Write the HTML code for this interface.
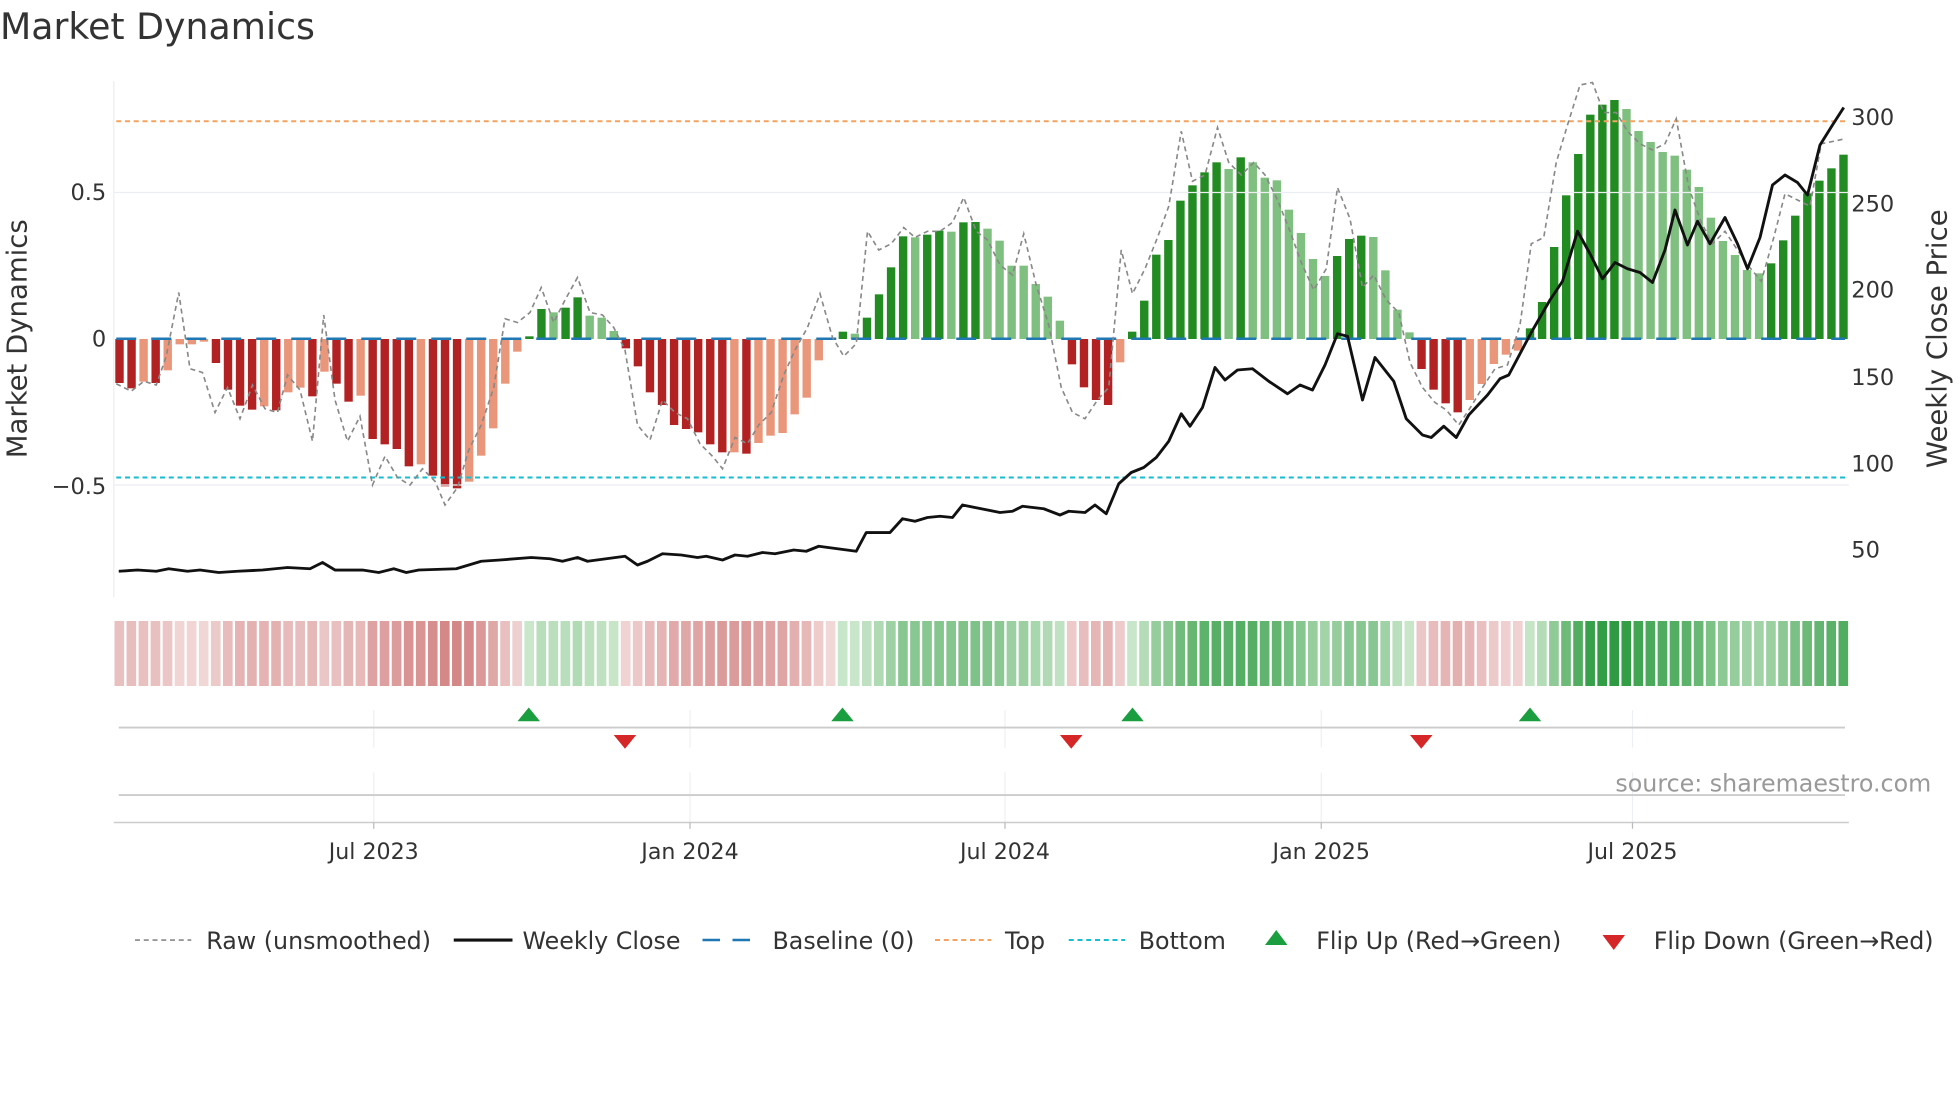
<!DOCTYPE html>
<html><head><meta charset="utf-8"><style>
html,body{margin:0;padding:0;background:#fff;width:1960px;height:1102px;overflow:hidden}
svg text{font-family:"DejaVu Sans","Liberation Sans",sans-serif;fill:#333}
</style></head><body>
<svg id="s" width="1960" height="1102" viewBox="0 0 1960 1102" xmlns="http://www.w3.org/2000/svg">
<g id="bars"></g>
<g id="strip"></g>
<g transform="scale(1.25)">
  <text x="0" y="31" font-size="29">Market Dynamics</text>
  <line x1="91" y1="65" x2="91" y2="478" stroke="#eee" stroke-width="1"/>
  <line x1="91" y1="154" x2="1479" y2="154" stroke="#eceef2" stroke-width="1"/>
  <line x1="91" y1="388" x2="1479" y2="388" stroke="#eceef2" stroke-width="1"/>
  <text x="85" y="160" font-size="18" text-anchor="end">0.5</text>
  <text x="85" y="277" font-size="18" text-anchor="end">0</text>
  <text x="85" y="395" font-size="18" text-anchor="end">−0.5</text>
  <text x="1481" y="100" font-size="18">300</text>
  <text x="1481" y="169" font-size="18">250</text>
  <text x="1481" y="238" font-size="18">200</text>
  <text x="1481" y="308" font-size="18">150</text>
  <text x="1481" y="377" font-size="18">100</text>
  <text x="1481" y="446" font-size="18">50</text>
  <text transform="translate(21,271) rotate(-90)" font-size="22" text-anchor="middle">Market Dynamics</text>
  <text transform="translate(1557,271) rotate(-90)" font-size="22" text-anchor="middle">Weekly Close Price</text>
  <line x1="93" y1="271" x2="1476" y2="271" stroke="#1f77b4" stroke-width="2" stroke-dasharray="16,12"/>
  <line x1="93" y1="97" x2="1476" y2="97" stroke="#f4a460" stroke-width="1.6" stroke-dasharray="4,3"/>
  <line x1="93" y1="382" x2="1476" y2="382" stroke="#17becf" stroke-width="1.6" stroke-dasharray="4,3"/>
  <polyline id="raw" fill="none" stroke="#888" stroke-width="1.3" stroke-dasharray="4,3"/>
  <polyline id="close" fill="none" stroke="#111" stroke-width="2.3" stroke-linejoin="round"/>
  <g stroke="#eef0f3" stroke-width="1">
    <line x1="299" y1="568" x2="299" y2="598"/><line x1="552" y1="568" x2="552" y2="598"/><line x1="804" y1="568" x2="804" y2="598"/><line x1="1057" y1="568" x2="1057" y2="598"/><line x1="1306" y1="568" x2="1306" y2="598"/>
    <line x1="299" y1="618" x2="299" y2="658"/><line x1="552" y1="618" x2="552" y2="658"/><line x1="804" y1="618" x2="804" y2="658"/><line x1="1057" y1="618" x2="1057" y2="658"/><line x1="1306" y1="618" x2="1306" y2="658"/>
  </g>
  <line x1="95" y1="582" x2="1476" y2="582" stroke="#ccc" stroke-width="1.5"/>
  <line x1="95" y1="636" x2="1476" y2="636" stroke="#ccc" stroke-width="1.5"/>
  <line x1="91" y1="658" x2="1479" y2="658" stroke="#ccc" stroke-width="1.2"/>
  <g stroke="#bbb"><line x1="299" y1="658" x2="299" y2="663"/><line x1="552" y1="658" x2="552" y2="663"/><line x1="804" y1="658" x2="804" y2="663"/><line x1="1057" y1="658" x2="1057" y2="663"/><line x1="1306" y1="658" x2="1306" y2="663"/></g>
  <g font-size="17.7" text-anchor="middle">
    <text x="299" y="687">Jul 2023</text><text x="552" y="687">Jan 2024</text><text x="804" y="687">Jul 2024</text><text x="1057" y="687">Jan 2025</text><text x="1306" y="687">Jul 2025</text>
  </g>
  <text x="1545" y="633" font-size="19" text-anchor="end" style="fill:#999">source: sharemaestro.com</text>
  <g fill="#1a9e3f">
    <polygon points="423,566 432,577 414,577"/><polygon points="674,566 683,577 665,577"/><polygon points="906,566 915,577 897,577"/><polygon points="1224,566 1233,577 1215,577"/>
  </g>
  <g fill="#d62728">
    <polygon points="491,588 509,588 500,599"/><polygon points="848,588 866,588 857,599"/><polygon points="1128,588 1146,588 1137,599"/>
  </g>
  <g font-size="19">
    <line x1="108" y1="752" x2="153" y2="752" stroke="#888" stroke-width="1.3" stroke-dasharray="4,3"/>
    <text x="165" y="759">Raw (unsmoothed)</text>
    <line x1="363" y1="752" x2="410" y2="752" stroke="#111" stroke-width="2.5"/>
    <text x="418" y="759">Weekly Close</text>
    <line x1="562" y1="752" x2="606" y2="752" stroke="#1f77b4" stroke-width="2" stroke-dasharray="14,10"/>
    <text x="618" y="759">Baseline (0)</text>
    <line x1="748" y1="752" x2="793" y2="752" stroke="#f4a460" stroke-width="1.6" stroke-dasharray="4,3"/>
    <text x="804" y="759">Top</text>
    <line x1="855" y1="752" x2="900" y2="752" stroke="#17becf" stroke-width="1.6" stroke-dasharray="4,3"/>
    <text x="911" y="759">Bottom</text>
    <polygon points="1021,744 1030,756 1012,756" fill="#1a9e3f"/>
    <text x="1053" y="759">Flip Up (Red→Green)</text>
    <polygon points="1282,748 1300,748 1291,760" fill="#d62728"/>
    <text x="1323" y="759">Flip Down (Green→Red)</text>
  </g>
</g>
</svg>
<script>
var NS="http://www.w3.org/2000/svg";
var d="-132D,-148D,-128L,-132D,-94L,-16L,-16L,-8L,-72D,-152D,-200D,-212D,-202L,-214D,-160L,-146L,-172D,-98L,-134D,-188D,-170L,-300D,-316D,-330D,-382D,-376L,-410D,-442D,-448D,-428L,-350L,-268L,-134L,-38L,8D,90D,80L,94D,125D,70L,64L,24L,-28D,-82D,-160D,-198D,-258D,-270D,-280D,"+
"-316D,-340D,-340L,-344D,-312L,-290L,-282L,-226L,-176L,-64L,0L,22D,16L,64D,134D,215D,308D,305L,313D,325D,322L,350D,351D,331L,295L,220L,220L,165L,127L,55L,-76D,-145D,-183D,-198D,-70L,22D,115D,253D,297D,415D,461D,500D,530D,510L,545D,530L,484L,476L,388L,"+
"318L,240L,189L,249D,300D,310D,306L,206L,88L,20L,-90D,-152D,-193D,-220D,-183L,-135L,-75L,-47L,-35L,32D,111D,276D,431D,555D,673D,703D,717D,690L,624L,591L,561L,550L,508L,456L,364L,294L,252L,207L,197L,227D,296D,370D,437D,475D,512D,553D";
var arr=d.split(","),bars=document.getElementById("bars"),strip=document.getElementById("strip");
var n=arr.length,x0=119.5,sp=(1843.5-119.5)/(n-1),Z=339;
function lerp(a,b,t){return Math.round(a+(b-a)*t)}
arr.forEach(function(s,i){
 var f=s.slice(-1),v=parseFloat(s)/3,x=x0+i*sp;
 var c=v<0?(f=="D"?"#b22222":"#e9967a"):(f=="D"?"#228b22":"#7fbf7f");
 if(Math.abs(v)>0.5){var r=document.createElementNS(NS,"rect");
 r.setAttribute("x",x-4.2);r.setAttribute("width",8.4);
 r.setAttribute("y",v>0?Z-v:Z);r.setAttribute("height",Math.abs(v));r.setAttribute("fill",c);bars.appendChild(r);}
 var t,col;
 if(v<=0){t=Math.min(1,-v/150);col="rgb("+lerp(242,212,t)+","+lerp(215,135,t)+","+lerp(215,135,t)+")";}
 else{t=Math.min(1,v/240);col="rgb("+lerp(205,45,t)+","+lerp(232,155,t)+","+lerp(205,65,t)+")";}
 var q=document.createElementNS(NS,"rect");
 q.setAttribute("x",x-sp/2+1);q.setAttribute("width",sp-2.4);q.setAttribute("y",621);q.setAttribute("height",65);q.setAttribute("fill",col);strip.appendChild(q);
});
document.getElementById("raw").setAttribute("points","93,307 105,313 115,305 125,308 133,285 143,234 152,295 162,298 172,330 182,310 192,335 202,308 212,327 222,330 230,300 240,312 250,353 259,252 268,320 278,353 288,333 298,388 308,365 318,382 328,388 338,375 348,385 356,404 366,390 375,360 385,340 395,310 404,255 414,258 424,250 433,230 443,258 452,240 462,222 472,250 482,252 491,262 500,280 510,340 520,352 530,320 540,330 550,335 560,355 570,365 578,375 588,350 598,355 607,340 617,330 627,300 636,280 646,262 656,235 666,270 675,285 685,275 694,185 703,200 713,195 723,182 732,190 742,185 752,185 762,178 771,158 781,185 790,192 800,212 810,220 819,187 829,228 839,260 849,310 858,330 868,335 878,320 887,310 897,200 906,235 916,215 926,190 935,165 945,105 954,145 964,140 974,102 983,130 993,140 1003,130 1012,140 1022,160 1032,185 1041,210 1051,232 1061,215 1070,150 1080,175 1090,230 1099,220 1109,240 1119,250 1128,290 1138,310 1148,322 1157,328 1167,340 1177,325 1186,310 1196,295 1206,292 1216,260 1225,195 1235,190 1245,130 1254,100 1264,68 1274,66 1283,90 1293,90 1302,105 1312,115 1322,120 1332,115 1341,95 1351,150 1361,178 1370,195 1380,185 1390,200 1399,213 1409,225 1419,190 1428,155 1438,160 1448,165 1457,115 1467,113 1476,111");
document.getElementById("close").setAttribute("points","95,457 110,456 125,457 135,455 150,457 160,456 175,458 190,457 210,456 230,454 248,455 258,450 268,456 290,456 303,458 315,455 325,458 335,456 365,455 385,449 400,448 425,446 440,447 450,449 462,446 470,449 500,445 510,452 518,449 530,443 545,444 558,446 565,445 578,448 588,444 598,445 610,442 620,443 635,440 645,441 655,437 685,441 693,426 712,426 722,415 732,417 742,414 752,413 762,414 770,404 785,407 800,410 810,409 818,405 835,407 848,412 855,409 868,410 876,404 885,411 895,387 905,378 915,374 925,366 935,353 945,331 952,341 962,326 972,294 980,304 990,296 1002,295 1015,305 1030,315 1040,308 1050,312 1060,292 1070,267 1078,269 1090,320 1100,286 1115,305 1125,335 1138,348 1145,350 1155,341 1165,350 1175,332 1190,316 1200,303 1207,300 1225,266 1240,240 1250,225 1262,185 1272,203 1282,223 1292,210 1302,215 1312,218 1322,226 1332,200 1340,168 1350,196 1358,177 1368,195 1380,174 1390,195 1398,215 1408,190 1418,148 1428,140 1438,146 1446,156 1456,116 1466,100 1475,86");
</script>
</body></html>
